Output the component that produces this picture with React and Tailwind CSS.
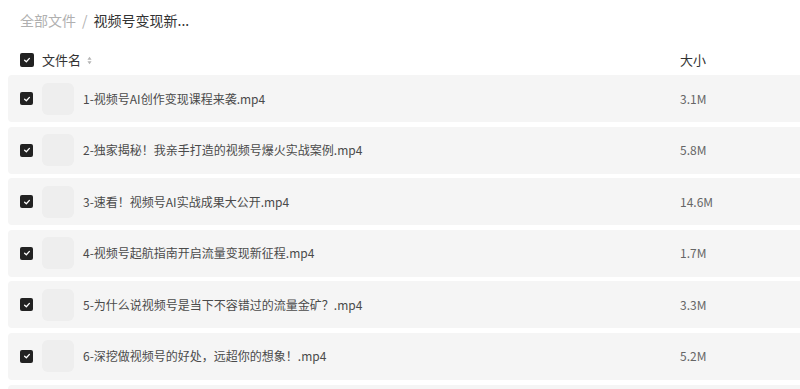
import React from 'react';

const files = [
    { name: '1-视频号AI创作变现课程来袭.mp4', size: '3.1M' },
    { name: '2-独家揭秘！我亲手打造的视频号爆火实战案例.mp4', size: '5.8M' },
    { name: '3-速看！视频号AI实战成果大公开.mp4', size: '14.6M' },
    { name: '4-视频号起航指南开启流量变现新征程.mp4', size: '1.7M' },
    { name: '5-为什么说视频号是当下不容错过的流量金矿？.mp4', size: '3.3M' },
    { name: '6-深挖做视频号的好处，远超你的想象！.mp4', size: '5.2M' },
];

function Check({ size = 'w-[13px] h-[13px]' }) {
    return (
        <div className={`${size} bg-[#222] rounded-[2px] flex items-center justify-center shrink-0`}>
            <svg viewBox="0 0 10 10" className="w-[8px] h-[8px]">
                <path d="M2 5.2 L4.2 7.2 L8 3" fill="none" stroke="white" strokeWidth="1.6" strokeLinecap="round" strokeLinejoin="round" />
            </svg>
        </div>
    );
}

export default function App() {
    return (
        <div className="w-[800px] h-[389px] overflow-hidden bg-white text-[#333]" style={{ fontFamily: '"Noto Sans CJK SC", "Noto Sans", sans-serif' }}>
            {/* breadcrumb */}
            <div className="pl-[20px] pt-[9px] h-[45px] text-[14px] leading-[22px] flex items-start">
                <span className="text-[#b0b0b0]">全部文件</span>
                <span className="text-[#b0b0b0] mx-[6px]">/</span>
                <span className="text-[#333]">视频号变现新...</span>
            </div>

            {/* header */}
            <div className="flex items-center h-[30px] text-[13px]">
                <div className="pl-[20px] flex items-center gap-[8px] flex-1">
                    <Check size="w-[14px] h-[14px]" />
                    <span className="text-[#333]">文件名</span>
                    <svg viewBox="0 0 6 10" className="w-[5px] h-[9px] -ml-[2px]">
                        <path d="M3 0.5 L5.5 4 H0.5 Z" fill="#b5b5b5" />
                        <path d="M3 9.5 L5.5 6 H0.5 Z" fill="#b5b5b5" />
                    </svg>
                </div>
                <div className="w-[120px] text-[#333]">大小</div>
            </div>

            {/* rows */}
            <div className="flex flex-col gap-[4.6px] pl-[8px]">
                {files.map((f) => (
                    <div key={f.name} className="h-[47px] bg-[#f5f5f5] rounded-l-[4px] flex items-center">
                        <div className="pl-[12px] flex items-center flex-1">
                            <Check />
                            <div className="w-[32px] h-[32px] rounded-[6px] bg-[#eeeeee] ml-[9px]" />
                            <span className="ml-[9px] text-[12px] text-[#4a4a4a]">{f.name}</span>
                        </div>
                        <div className="w-[120px] text-[12px] text-[#666]">{f.size}</div>
                    </div>
                ))}
                <div className="h-[47px] bg-[#f5f5f5] rounded-l-[4px]" />
            </div>
        </div>
    );
}
